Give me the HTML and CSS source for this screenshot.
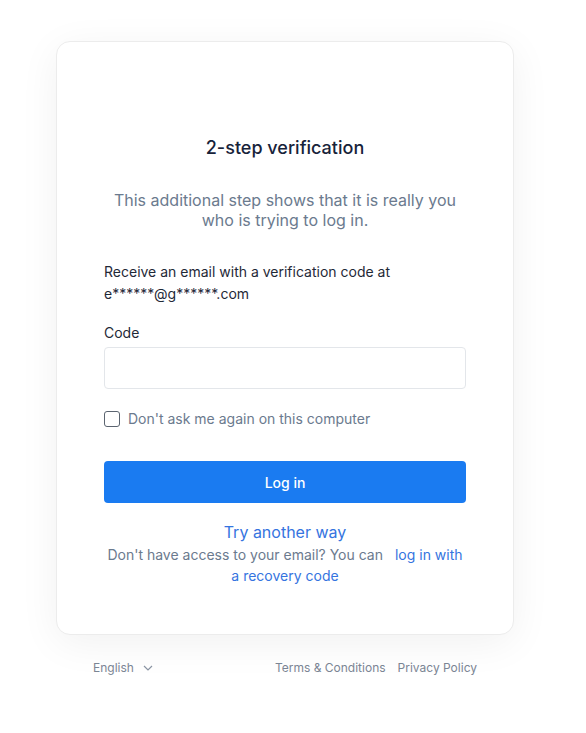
FILE: index.html
```html
<!DOCTYPE html>
<html lang="en">
<head>
    <meta charset="UTF-8">
    <meta name="viewport" content="width=device-width, initial-scale=1.0">
    <title>2-step verification</title>
    <link rel="stylesheet" href="styles.css">
</head>
<body>
<div class="page">
    <div class="card">
        <h1 class="title">2-step verification</h1>
        <p class="subtitle">This additional step shows that it is really you who is trying to log in.</p>

        <p class="info">Receive an email with a verification code at<br>e******@g******.com</p>

        <label class="label" for="code">Code</label>
        <input class="input" id="code" type="text">

        <label class="check">
            <input type="checkbox">
            <span>Don't ask me again on this computer</span>
        </label>

        <button class="btn">Log in</button>

        <div class="other">
            <a href="#" class="other-link">Try another way</a>
            <p class="other-text">Don't have access to your email? You can <a href="#">log in with a recovery code</a></p>
        </div>
    </div>

    <div class="footer">
        <div class="lang">English
            <svg width="10" height="6" viewBox="0 0 10 6"><path d="M1 1l4 4 4-4" fill="none" stroke="#8a94a3" stroke-width="1.2"/></svg>
        </div>
        <div class="links">
            <a href="#">Terms &amp; Conditions</a>
            <a href="#">Privacy Policy</a>
        </div>
    </div>
</div>
</body>
</html>
```

FILE: styles.css
```css
body {
    margin: 0;
    background: #fff;
    font-family: Inter, "Noto Sans", sans-serif;
    color: #1f2937;
}
.page {
    width: 458px;
    margin-left: 56px;
    padding-top: 41px;
}
.card {
    box-sizing: border-box;
    height: 594px;
    padding: 89px 47px 0;
    background: #fff;
    border: 1px solid #ececec;
    border-radius: 14px;
    box-shadow: 0 8px 40px rgba(0, 0, 0, 0.06);
    display: flex;
    flex-direction: column;
}
.title {
    margin: 0;
    font-size: 18px;
    font-weight: 450;
    line-height: 34px;
    text-align: center;
    color: #17233a;
}
.subtitle {
    margin: 25px 0 0;
    font-size: 16px;
    line-height: 20px;
    text-align: center;
    color: #6b7a8e;
}
.info {
    margin: 31px 0 0;
    font-size: 14px;
    line-height: 22px;
    color: #1f2937;
}
.label {
    margin-top: 20px;
    font-size: 14px;
    line-height: 16px;
    color: #1f2937;
}
.input {
    box-sizing: border-box;
    margin-top: 6px;
    height: 42px;
    border: 1px solid #e3e6ea;
    border-radius: 4px;
    outline: none;
    padding: 0 12px;
    font: inherit;
}
.check {
    margin-top: 21px;
    display: flex;
    align-items: center;
    gap: 8px;
    font-size: 14px;
    color: #6b7a8e;
}
.check input {
    margin: 0;
    width: 16px;
    height: 16px;
    appearance: none;
    border: 1px solid #5b6470;
    border-radius: 3px;
}
.btn {
    margin-top: 34px;
    height: 42px;
    border: none;
    border-radius: 4px;
    background: #1a7bf1;
    color: #fff;
    font: inherit;
    font-size: 14px;
    font-weight: 500;
}
.other {
    margin-top: 18px;
    text-align: center;
}
.other-link {
    display: block;
    font-size: 16px;
    line-height: 22px;
    color: #3574e0;
    text-decoration: none;
}
.other-text {
    margin: 1px 0 0;
    font-size: 14px;
    line-height: 21px;
    color: #6b7a8e;
}
.other-text a {
    color: #3574e0;
    text-decoration: none;
    padding-left: 8px;
}
.footer {
    display: flex;
    justify-content: space-between;
    padding: 25px 37px 0;
    font-size: 12px;
    color: #7b8594;
}
.lang {
    display: flex;
    align-items: center;
    gap: 9px;
}
.links {
    display: flex;
    gap: 12px;
}
.links a {
    color: #7b8594;
    text-decoration: none;
}
```
